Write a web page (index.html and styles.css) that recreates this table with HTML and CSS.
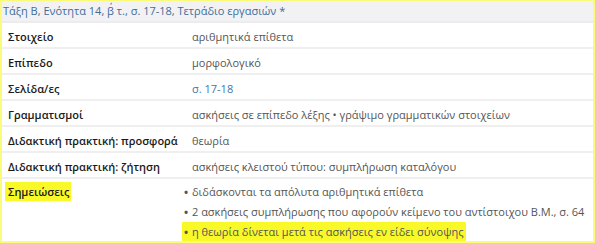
FILE: index.html
```html
<!DOCTYPE html>
<html lang="el">
<head>
<meta charset="utf-8">
<link rel="stylesheet" href="styles.css">
</head>
<body>
<div class="frame">
  <div class="head">Τάξη Β, Ενότητα 14, β΄ τ., σ. 17-18, Τετράδιο εργασιών *</div>
  <div class="row"><div class="lbl">Στοιχείο</div><div class="val">αριθμητικά επίθετα</div></div>
  <div class="row"><div class="lbl">Επίπεδο</div><div class="val">μορφολογικό</div></div>
  <div class="row"><div class="lbl">Σελίδα/ες</div><div class="val"><span class="link">σ. 17-18</span></div></div>
  <div class="row"><div class="lbl">Γραμματισμοί</div><div class="val">ασκήσεις σε επίπεδο λέξης • γράψιμο γραμματικών στοιχείων</div></div>
  <div class="row"><div class="lbl">Διδακτική πρακτική: προσφορά</div><div class="val">θεωρία</div></div>
  <div class="row"><div class="lbl">Διδακτική πρακτική: ζήτηση</div><div class="val">ασκήσεις κλειστού τύπου: συμπλήρωση καταλόγου</div></div>
  <div class="row last">
    <div class="lbl"><span class="hl hl-lbl">Σημειώσεις</span></div>
    <div class="val list">
      <div class="item"><span class="b">•</span>διδάσκονται τα απόλυτα αριθμητικά επίθετα</div>
      <div class="item"><span class="b">•</span>2 ασκήσεις συμπλήρωσης που αφορούν κείμενο του αντίστοιχου Β.Μ., σ. 64</div>
      <div class="item"><span class="hl hl-item"><span class="b">•</span>η θεωρία δίνεται μετά τις ασκήσεις εν είδει σύνοψης</span></div>
    </div>
  </div>
</div>
</body>
</html>
```
FILE: styles.css
```css
html, body { margin: 0; padding: 0; background: #fff; }
body { font-family: "Open Sans", "DejaVu Sans", sans-serif; font-size: 11px; }
.frame {
  width: 595px; height: 243px; box-sizing: border-box;
  border: 2px solid #fbfb7a; border-top-width: 1px;
  background: #fff; overflow: hidden;
}
.head {
  height: 20px; background: #f2f2f4; color: #3d6d9a;
  font-size: 11px;
  padding-left: 1px; line-height: 20px;
  border-bottom: 2px solid #ececee;
}
.row {
  display: flex; height: 26px; box-sizing: border-box;
  border-bottom: 2px solid #efefef; align-items: center;
  padding-top: 2px;
}
.row.last { border-bottom: none; height: auto; align-items: flex-start; padding-top: 3px; }
.lbl { width: 184px; flex: none; padding-left: 6px; font-weight: 600; font-size: 11px; color: #1a1a1a; }
.val { flex: 1; color: #555; white-space: nowrap; }
.link { color: #3f78ab; }
.list { margin-left: -8px; }
.item { line-height: 20px; }
.b { display: inline-block; width: 8px; font-weight: 700; }
.row.last .lbl { line-height: 20px; }
.hl { background: #f9f92a; padding: 2px 2px 2px 3px; }
.hl-lbl { margin-left: -3px; }
.hl-item { margin-left: -2px; padding-left: 2px; padding-right: 3px; }
```
